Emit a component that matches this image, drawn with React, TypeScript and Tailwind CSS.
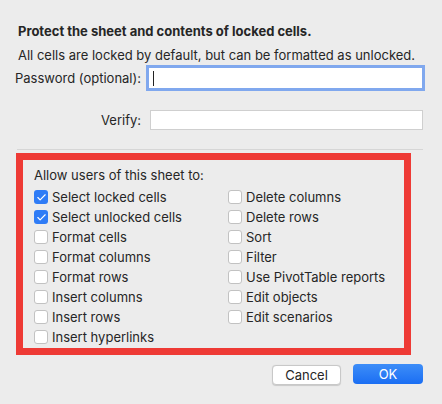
import { Check } from "lucide-react";

const leftItems = [
  { label: "Select locked cells", checked: true },
  { label: "Select unlocked cells", checked: true },
  { label: "Format cells", checked: false },
  { label: "Format columns", checked: false },
  { label: "Format rows", checked: false },
  { label: "Insert columns", checked: false },
  { label: "Insert rows", checked: false },
  { label: "Insert hyperlinks", checked: false },
];

const rightItems = [
  "Delete columns",
  "Delete rows",
  "Sort",
  "Filter",
  "Use PivotTable reports",
  "Edit objects",
  "Edit scenarios",
];

function Checkbox({ label, checked }: { label: string; checked?: boolean }) {
  return (
    <div className="flex items-center h-[20px] gap-[4px]">
      {checked ? (
        <span className="w-[14px] h-[14px] rounded-[3px] bg-[#2f7cf6] flex items-center justify-center shrink-0">
          <Check size={11} strokeWidth={2.5} className="text-white" />
        </span>
      ) : (
        <span className="w-[14px] h-[14px] rounded-[3px] bg-white border border-[#c2c2c2] shrink-0" />
      )}
      <span className="whitespace-nowrap">{label}</span>
    </div>
  );
}

export default function App() {
  return (
    <div
      className="w-[442px] h-[404px] bg-[#ececec] text-[#262626] text-[13px] leading-[16px] overflow-hidden"
      style={{ fontFamily: "Inter, 'Liberation Sans', sans-serif" }}
    >
      <div className="px-[18px] pt-[23px]">
        <p className="font-bold whitespace-nowrap">Protect the sheet and contents of locked cells.</p>
        <p className="mt-[8px] whitespace-nowrap">All cells are locked by default, but can be formatted as unlocked.</p>

        <div className="flex items-center mt-[5px] h-[20px]">
          <span className="w-[123px] flex justify-end whitespace-nowrap">Password (optional):</span>
          <div className="ml-[8px] w-[273px] h-[20px] bg-white ring-[3px] ring-[#80a8ee] flex items-center pl-[4px]">
            <span className="w-px h-[15px] bg-[#222]" />
          </div>
        </div>

        <div className="flex items-center mt-[22px] h-[20px]">
          <span className="w-[123px] flex justify-end">Verify:</span>
          <div className="ml-[9px] w-[273px] h-[20px] bg-white border border-[#cfcfcf]" />
        </div>

        <div className="mt-[19px] ml-[-1px] w-[406px] h-px bg-[#d6d6d6]" />
      </div>

      <div className="ml-[16px] mt-[3px] w-[395px] h-[202px] border-[7px] border-[#ee3a35] pl-[11px] pt-[7px]">
        <p>Allow users of this sheet to:</p>
        <div className="flex mt-[4px]">
          <div className="w-[194px] flex flex-col">
            {leftItems.map((it) => (
              <Checkbox key={it.label} label={it.label} checked={it.checked} />
            ))}
          </div>
          <div className="flex flex-col">
            {rightItems.map((l) => (
              <Checkbox key={l} label={l} />
            ))}
          </div>
        </div>
      </div>

      <div className="flex justify-end gap-[12px] pr-[19px] mt-[9px]">
        <button className="w-[69px] h-[20px] mt-[1px] bg-white border border-[#c8c8c8] rounded-[4px] shadow-[0_0.5px_1px_rgba(0,0,0,0.15)] text-[13px] leading-[18px] text-[#262626]">
          Cancel
        </button>
        <button className="w-[70px] h-[20px] rounded-[4px] bg-gradient-to-b from-[#3d8df8] to-[#1a6ef3] text-white text-[13px] leading-[20px]">
          OK
        </button>
      </div>
    </div>
  );
}
